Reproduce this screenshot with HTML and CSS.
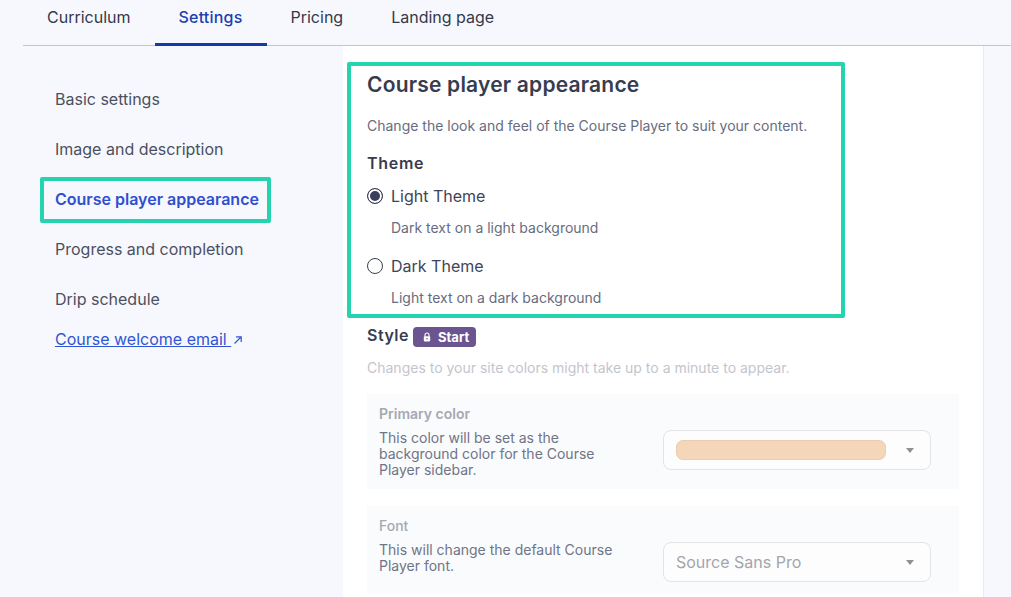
FILE: index.html
```html
<!DOCTYPE html>
<html lang="en">
<head>
    <meta charset="UTF-8">
    <title>Course player appearance</title>
    <link rel="stylesheet" href="styles.css">
</head>
<body>
    <nav class="tabs">
        <a class="tab">Curriculum</a>
        <a class="tab tab-active">Settings</a>
        <a class="tab">Pricing</a>
        <a class="tab">Landing page</a>
    </nav>

    <div class="layout">
        <aside class="side-nav">
            <a class="side-item">Basic settings</a>
            <a class="side-item">Image and description</a>
            <a class="side-item side-active">Course player appearance</a>
            <a class="side-item">Progress and completion</a>
            <a class="side-item">Drip schedule</a>
            <a class="side-link"><span class="side-link-text">Course welcome email&nbsp;</span><svg class="side-link-icon" viewBox="0 0 10 10" width="10" height="10">
                    <path d="M1.5 8.5 L8 2 M3 1.8 H8.2 V7" fill="none" stroke="#2f55d4" stroke-width="1.2"/>
                </svg></a>
        </aside>

        <main class="panel">
            <h2 class="panel-title">Course player appearance</h2>
            <p class="panel-desc">Change the look and feel of the Course Player to suit your content.</p>

            <h3 class="group-title">Theme</h3>
            <label class="radio-row">
                <span class="radio radio-on"></span>
                <span class="radio-label">Light Theme</span>
            </label>
            <p class="radio-desc">Dark text on a light background</p>
            <label class="radio-row">
                <span class="radio"></span>
                <span class="radio-label">Dark Theme</span>
            </label>
            <p class="radio-desc">Light text on a dark background</p>

            <div class="style-head">
                <h3 class="group-title">Style</h3>
                <span class="badge">
                    <svg viewBox="0 0 10 12" width="8" height="10">
                        <path d="M2.5 5.5 V3.5 a2.5 2.5 0 0 1 5 0 V5.5" fill="none" stroke="#fff" stroke-width="1.4"/>
                        <rect x="1" y="5" width="8" height="6.5" rx="1" fill="#fff"/>
                        <circle cx="5" cy="8.2" r="1" fill="#6b5590"/>
                    </svg>
                    Start
                </span>
            </div>
            <p class="style-note">Changes to your site colors might take up to a minute to appear.</p>

            <section class="option-card">
                <div class="option-text">
                    <div class="option-name">Primary color</div>
                    <p class="option-desc">This color will be set as the background color for the Course Player sidebar.</p>
                </div>
                <div class="select">
                    <span class="swatch"></span>
                    <span class="caret"></span>
                </div>
            </section>

            <section class="option-card option-card-font">
                <div class="option-text">
                    <div class="option-name option-name-plain">Font</div>
                    <p class="option-desc">This will change the default Course Player font.</p>
                </div>
                <div class="select">
                    <span class="select-value">Source Sans Pro</span>
                    <span class="caret"></span>
                </div>
            </section>
        </main>
    </div>

    <div class="highlight highlight-nav"></div>
    <div class="highlight highlight-panel"></div>
</body>
</html>
```

FILE: styles.css
```css
html, body {
    height: 100%;
}

body {
    margin: 0;
    background-color: #f7f8fd;
    font-family: 'Inter', sans-serif;
    color: #3a3f51;
    overflow: hidden;
    position: relative;
}

.tabs {
    display: flex;
    height: 45px;
    margin-left: 23px;
    border-bottom: 1px solid #c4c6cc;
}

.tab {
    padding: 0 24px;
    height: 46px;
    line-height: 35px;
    font-size: 16px;
    color: #33384a;
    box-sizing: border-box;
}

.tab-active {
    color: #1c3fae;
    font-weight: 500;
    letter-spacing: 0.2px;
    border-bottom: 3px solid #1438ae;
}

.layout {
    display: flex;
    height: 551px;
}

.side-nav {
    width: 343px;
    padding: 28px 0 0 55px;
    box-sizing: border-box;
    display: flex;
    flex-direction: column;
}

.side-item {
    height: 50px;
    line-height: 50px;
    font-size: 16px;
    color: #4b5060;
}

.side-active {
    color: #2f4fd0;
    font-weight: 600;
}

.side-link {
    margin-top: 5px;
    line-height: 20px;
    font-size: 16px;
    color: #2f55d4;
}

.side-link-text {
    text-decoration: underline;
}

.side-link-icon {
    margin-left: 2px;
}

.panel {
    width: 641px;
    background: #fff;
    border-right: 1px solid #e9ebf1;
    box-sizing: border-box;
    padding: 24px 24px 0;
}

.panel-title {
    margin: 0;
    font-family: 'Inter', sans-serif;
    font-size: 21px;
    font-weight: 600;
    letter-spacing: 0.2px;
    line-height: 30px;
    color: #373c4f;
}

.panel-desc {
    margin: 16px 0 0;
    font-size: 14px;
    line-height: 20px;
    color: #676c80;
}

.group-title {
    margin: 0;
    font-size: 16px;
    font-weight: 600;
    letter-spacing: 0.5px;
    line-height: 20px;
    color: #373c4f;
}

.panel-desc + .group-title {
    margin-top: 17px;
    letter-spacing: 0.7px;
}

.radio-row {
    display: flex;
    align-items: center;
    gap: 8px;
    height: 24px;
    margin-top: 11px;
}

.radio-desc + .radio-row {
    margin-top: 16px;
}

.radio {
    width: 16px;
    height: 16px;
    border: 1px solid #3a3f51;
    border-radius: 50%;
    box-sizing: border-box;
    background: #fff;
}

.radio-on {
    background: #3a3f5c;
    box-shadow: inset 0 0 0 2px #fff;
}

.radio-label {
    font-size: 16px;
    color: #3f4456;
}

.radio-desc {
    margin: 10px 0 0 24px;
    font-size: 14px;
    line-height: 20px;
    color: #676c80;
}

.style-head {
    display: flex;
    align-items: flex-start;
    gap: 4px;
    margin-top: 17px;
}

.badge {
    display: inline-flex;
    align-items: center;
    gap: 7px;
    height: 20px;
    padding: 0 7px 0 10px;
    margin-top: 2px;
    background: #6b5590;
    border-radius: 4px;
    font-size: 13px;
    font-weight: 700;
    color: #fff;
}

.style-note {
    margin: 11px 0 0;
    font-size: 14px;
    line-height: 20px;
    color: #c3c5ce;
}

.option-card {
    display: flex;
    justify-content: space-between;
    width: 592px;
    height: 95px;
    margin-top: 16px;
    padding: 12px 28px 0 12px;
    box-sizing: border-box;
    background: #fafbfd;
}

.option-card-font {
    margin-top: 17px;
    height: 88px;
}

.option-text {
    width: 240px;
}

.option-name {
    font-size: 14px;
    font-weight: 600;
    line-height: 16px;
    color: #a6a8b2;
}

.option-name-plain {
    font-weight: 500;
}

.option-desc {
    margin: 8px 0 0;
    font-size: 14px;
    line-height: 16px;
    color: #6f7486;
}

.select {
    display: flex;
    align-items: center;
    justify-content: space-between;
    width: 268px;
    height: 40px;
    margin-top: 24px;
    padding: 0 16px 0 12px;
    box-sizing: border-box;
    background: #fdfdfe;
    border: 1px solid #e3e4e9;
    border-radius: 8px;
}

.swatch {
    width: 210px;
    height: 20px;
    background: #f3d7b8;
    border: 1px solid #e8cdb0;
    border-radius: 7px;
    box-sizing: border-box;
}

.select-value {
    font-size: 16px;
    color: #a3a5ac;
}

.caret {
    width: 0;
    height: 0;
    border-left: 4.5px solid transparent;
    border-right: 4.5px solid transparent;
    border-top: 5px solid #8f9096;
}

.highlight {
    position: absolute;
    border: 4px solid #25d4ae;
    border-radius: 2px;
    box-sizing: border-box;
    pointer-events: none;
}

.highlight-nav {
    left: 40px;
    top: 177px;
    width: 231px;
    height: 46px;
}

.highlight-panel {
    left: 347px;
    top: 62px;
    width: 498px;
    height: 256px;
}
```
